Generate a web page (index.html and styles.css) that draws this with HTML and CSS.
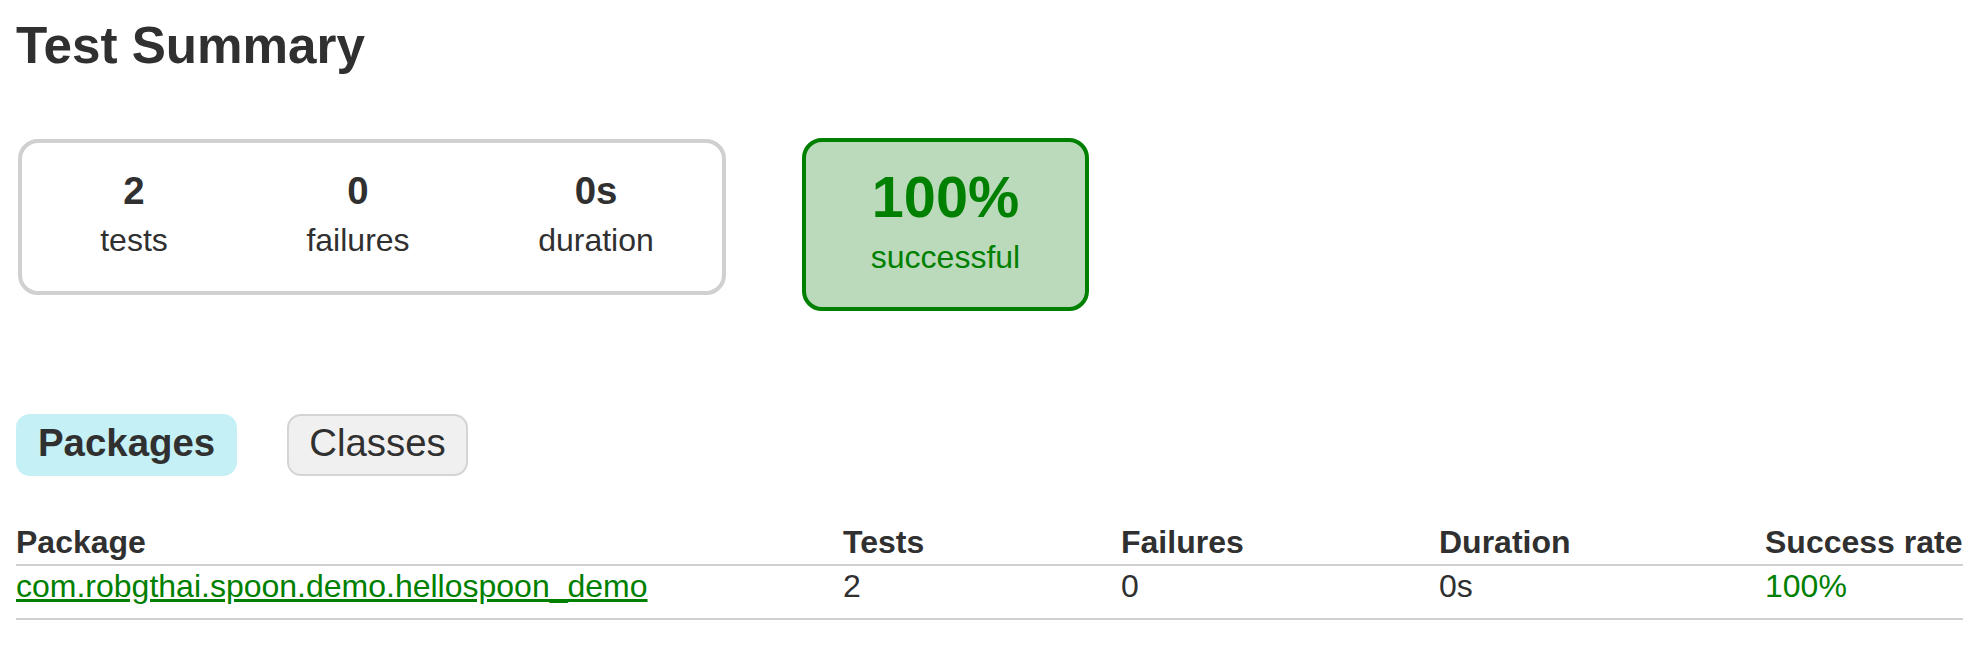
FILE: index.html
```html
<!DOCTYPE html>
<html>
<head>
<meta charset="utf-8">
<title>Test results - Test Summary</title>
<link rel="stylesheet" href="styles.css">
</head>
<body>
<div class="content">
  <h1 class="title">Test Summary</h1>
  <div class="summary">
    <div class="summary-group">
      <div class="info-box info-tests">
        <div class="counter">2</div>
        <p class="label">tests</p>
      </div>
      <div class="info-box info-failures">
        <div class="counter">0</div>
        <p class="label">failures</p>
      </div>
      <div class="info-box info-duration">
        <div class="counter">0s</div>
        <p class="label">duration</p>
      </div>
    </div>
    <div class="success-rate">
      <div class="percent">100%</div>
      <p class="label">successful</p>
    </div>
  </div>
  <ul class="tab-links">
    <li class="tab-link selected"><a href="#tab0">Packages</a></li>
    <li class="tab-link"><a href="#tab1">Classes</a></li>
  </ul>
  <table class="results">
    <thead>
      <tr>
        <th class="col-package">Package</th>
        <th class="col-tests">Tests</th>
        <th class="col-failures">Failures</th>
        <th class="col-duration">Duration</th>
        <th class="col-rate">Success rate</th>
      </tr>
    </thead>
    <tbody>
      <tr>
        <td class="success"><a href="#">com.robgthai.spoon.demo.hellospoon_demo</a></td>
        <td>2</td>
        <td>0</td>
        <td>0s</td>
        <td class="success">100%</td>
      </tr>
    </tbody>
  </table>
</div>
</body>
</html>
```

FILE: styles.css
```css
html, body {
  margin: 0;
  padding: 0;
  background: #ffffff;
}

body {
  font-family: "Liberation Sans", Arial, Helvetica, sans-serif;
  font-size: 32px;
  color: #303030;
}

.content {
  padding: 16px 0 0 16px;
}

.title {
  margin: 0;
  font-size: 51.2px;
  line-height: 60px;
  font-weight: bold;
  white-space: nowrap;
}

.summary {
  display: flex;
  align-items: flex-start;
  margin-top: 62px;
}

.summary-group {
  display: flex;
  margin: 1px 0 0 2px;
  border: 4px solid #d0d0d0;
  border-radius: 20px;
}

.info-box {
  width: 224px;
  padding: 26px 0 32px;
  text-align: center;
}

.info-duration {
  width: 252px;
}

.counter {
  font-size: 38.4px;
  line-height: 44px;
  font-weight: bold;
  margin-bottom: 9px;
}

.label {
  margin: 0;
  font-size: 32px;
  line-height: 37px;
}

.success-rate {
  width: 279px;
  margin-left: 76px;
  padding: 22px 0 31px;
  text-align: center;
  border: 4px solid #008000;
  border-radius: 20px;
  background-color: #bbd9bb;
  color: #008000;
}

.percent {
  font-size: 57.6px;
  line-height: 66px;
  font-weight: bold;
  margin-bottom: 9px;
}

.tab-links {
  display: flex;
  gap: 50px;
  list-style: none;
  margin: 103px 0 0;
  padding: 0;
}

.tab-link {
  padding: 8px 20px 12px;
  border: 2px solid #d4d4d4;
  border-radius: 14px;
  background-color: #f0f0f0;
  font-size: 38.4px;
  line-height: 38px;
}

.tab-link a {
  display: block;
  color: #303030;
  text-decoration: none;
}

.tab-link.selected {
  background-color: #c5f0f5;
  border-color: #c5f0f5;
  font-weight: bold;
}

.results {
  margin-top: 50px;
  width: 1947px;
  table-layout: fixed;
  border-collapse: collapse;
  border-bottom: 2px solid #d0d0d0;
}

.results th,
.results td {
  box-sizing: border-box;
  text-align: left;
  white-space: nowrap;
  padding-left: 192px;
  font-size: 32px;
  line-height: 32px;
}

.results th {
  padding-top: 0;
  padding-bottom: 6px;
  font-weight: bold;
  border-bottom: 2px solid #d0d0d0;
}

.results td {
  padding-top: 4px;
  padding-bottom: 16px;
}

.results th:first-child,
.results td:first-child {
  padding-left: 0;
}

.col-package { width: 635px; }
.col-tests { width: 278px; }
.col-failures { width: 318px; }
.col-duration { width: 326px; }
.col-rate { width: 390px; }

.results .success,
.results .success a {
  color: #008000;
}
```
